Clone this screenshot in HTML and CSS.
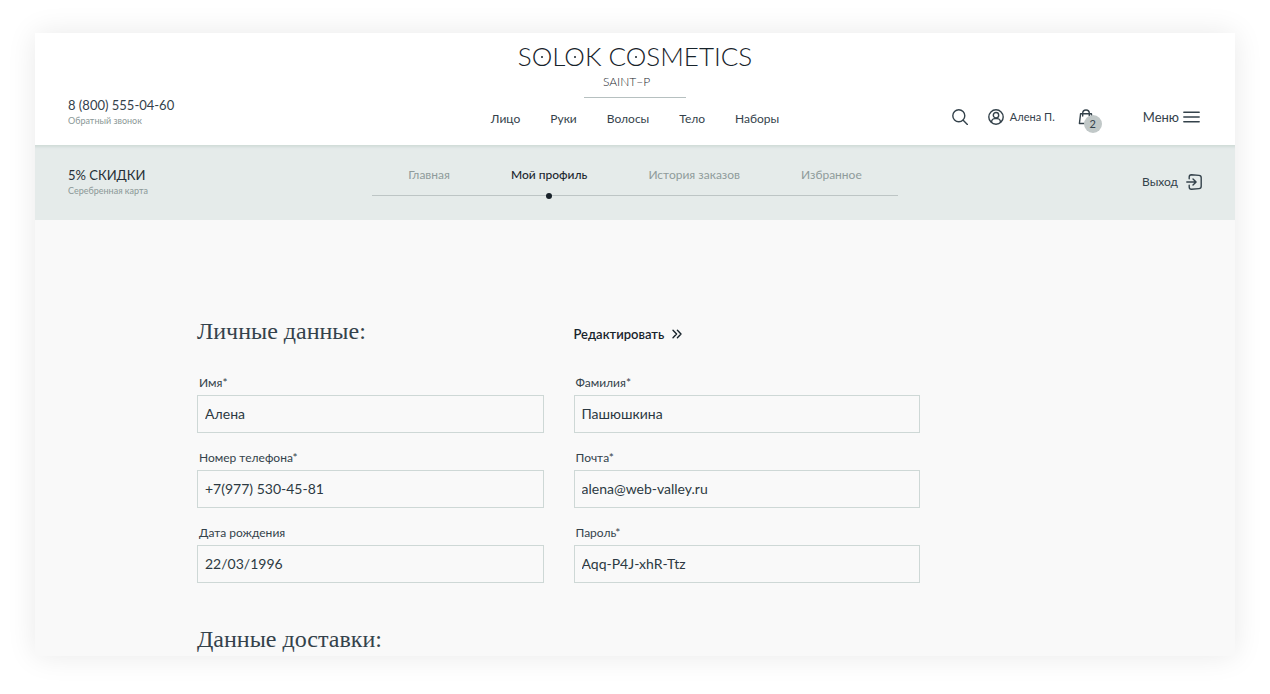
FILE: index.html
```html
<!DOCTYPE html>
<html lang="ru">
<head>
<meta charset="utf-8">
<meta name="viewport" content="width=device-width, initial-scale=1">
<title>Solok Cosmetics — Мой профиль</title>
<link rel="stylesheet" href="styles.css">
</head>
<body>
<div class="shop">
  <header class="header">
    <div class="contact">
      <a class="contact-phone" href="tel:88005550460">8 (800) 555-04-60</a>
      <a class="contact-note" href="#callback">Обратный звонок</a>
    </div>
    <div class="brand">
      <a class="logo" href="#home">
        <span class="logo-name">S<span class="dotted">O</span>L<span class="dotted">O</span>K C<span class="dotted">O</span>SMETICS</span>
        <span class="logo-city">SAINT–P</span>
      </a>
      <nav class="catalog">
        <a href="#face">Лицо</a>
        <a href="#hands">Руки</a>
        <a href="#hair">Волосы</a>
        <a href="#body">Тело</a>
        <a href="#sets">Наборы</a>
      </nav>
    </div>
    <div class="actions">
      <button class="action" type="button" aria-label="Поиск">
        <svg class="icon" viewBox="0 0 16 16"><circle cx="6.8" cy="6.8" r="6"/><path d="M11.2 11.2 15.4 15.4"/></svg>
      </button>
      <a class="action user" href="#profile">
        <svg class="icon" viewBox="0 0 16 16"><circle cx="8" cy="8" r="7.2"/><circle cx="8" cy="6.2" r="2.7"/><path d="M3.6 13.2v-.8c0-1.500 1.600-2.800 3.200-2.800h2.400c1.600 0 3.200 1.300 3.200 2.800v.8"/></svg>
        <span>Алена П.</span>
      </a>
      <a class="action cart" href="#cart" aria-label="Корзина">
        <svg class="icon" viewBox="0 0 16 16"><path d="M2.600 4.700h10.800l1.200 9.800H1.400zM4.700 7V4.300a3.300 3.300 0 0 1 6.600 0V7"/></svg>
        <span class="cart-count">2</span>
      </a>
      <button class="action menu" type="button">
        <span>Меню</span>
        <svg class="icon-menu" viewBox="0 0 17 12"><path d="M.8 1.200h15.400M.8 6h15.400M.8 10.800h15.400"/></svg>
      </button>
    </div>
  </header>

  <div class="account-bar">
    <div class="contact">
      <span class="discount">5% СКИДКИ</span>
      <span class="contact-note">Серебренная карта</span>
    </div>
    <nav class="tabs">
      <a href="#main">Главная</a>
      <a class="tab-active" href="#profile" aria-current="page">Мой профиль</a>
      <a href="#orders">История заказов</a>
      <a href="#favorites">Избранное</a>
    </nav>
    <a class="logout" href="#logout">
      <span>Выход</span>
      <svg class="icon" viewBox="0 0 16 16"><path d="M3.200 4.700V3c0-1.500.8-2.200 2.200-2.200l7.600.6c1.500.1 2.200.9 2.200 2.300v8.600c0 1.400-.7 2.200-2.200 2.300l-7.600.6c-1.400 0-2.200-.7-2.200-2.200v-1.700M.8 8h9M7 4.900 10.100 8 7 11.100"/></svg>
    </a>
  </div>

  <main class="content">
    <form class="profile">
      <h2 class="title">Личные данные:</h2>
      <button class="edit" type="button">
        <span>Редактировать</span>
        <svg class="icon-edit" viewBox="0 0 10 10"><path d="M1 1.200 4.600 5 1 8.800M5.400 1.200 9 5 5.400 8.800"/></svg>
      </button>
      <div class="field">
        <label for="name">Имя*</label>
        <input id="name" type="text" value="Алена">
      </div>
      <div class="field">
        <label for="surname">Фамилия*</label>
        <input id="surname" type="text" value="Пашюшкина">
      </div>
      <div class="field">
        <label for="phone">Номер телефона*</label>
        <input id="phone" type="tel" value="+7(977) 530-45-81">
      </div>
      <div class="field">
        <label for="email">Почта*</label>
        <input id="email" type="email" value="alena@web-valley.ru">
      </div>
      <div class="field">
        <label for="birthday">Дата рождения</label>
        <input id="birthday" type="text" value="22/03/1996">
      </div>
      <div class="field">
        <label for="password">Пароль*</label>
        <input id="password" type="text" value="Aqq-P4J-xhR-Ttz">
      </div>
    </form>
    <h2 class="title">Данные доставки:</h2>
  </main>
</div>
</body>
</html>
```

FILE: styles.css
```css
* {
  box-sizing: border-box;
}

body {
  margin: 0;
  padding: 33px 35px 38px;
  background: #fff;
  color: #34424b;
  font-family: "Lato", "Noto Sans", sans-serif;
  font-size: 13px;
  line-height: 18px;
}

a {
  color: inherit;
  text-decoration: none;
}

button {
  padding: 0;
  border: 0;
  background: none;
  color: inherit;
  font: inherit;
  cursor: pointer;
}

svg {
  display: block;
  fill: none;
  stroke: currentColor;
  stroke-width: 1.4;
  stroke-linecap: round;
  stroke-linejoin: round;
}

.shop {
  background: #f9f9f9;
  box-shadow: 0 0 28px rgba(0, 0, 0, 0.09);
}

.header,
.account-bar {
  display: grid;
  grid-template-columns: 1fr auto 1fr;
  padding: 0 33px;
}

.header {
  align-items: end;
  padding-top: 10px;
  padding-bottom: 17px;
  background: #fff;
}

.contact {
  display: flex;
  flex-direction: column;
}

.contact-phone,
.discount {
  font-size: 13px;
  line-height: 18px;
}

.contact-note {
  color: #8b9897;
  font-size: 9px;
  line-height: 14px;
}

.brand,
.logo {
  display: flex;
  flex-direction: column;
  align-items: center;
}

.logo {
  color: #17232b;
}

.logo-name {
  font-size: 26px;
  font-weight: 300;
  line-height: 26px;
}

.dotted {
  position: relative;
}

.dotted::after {
  content: "";
  position: absolute;
  top: 50%;
  left: 50%;
  width: 2px;
  height: 2px;
  margin-left: -1px;
  border-radius: 50%;
  background: currentColor;
}

.logo-city {
  padding: 4px 36px 7px 19px;
  border-bottom: 1px solid #b6c0c0;
  font-size: 12px;
  font-weight: 300;
  line-height: 17px;
}

.catalog {
  display: flex;
  gap: 30px;
  padding-top: 12px;
  font-size: 12px;
}

.actions {
  display: flex;
  align-items: center;
  justify-content: flex-end;
  padding: 0 2px 2px 0;
}

.action {
  display: flex;
  align-items: center;
}

.icon {
  width: 16px;
  height: 16px;
}

.user {
  gap: 6px;
  margin-left: 20px;
  font-size: 11px;
}

.cart {
  position: relative;
  margin-left: 23px;
}

.cart-count {
  position: absolute;
  top: 6px;
  left: 6px;
  width: 18px;
  border-radius: 50%;
  background: #c1c8c8;
  font-size: 11px;
  text-align: center;
}

.menu {
  gap: 4px;
  margin-left: 49px;
}

.icon-menu {
  width: 17px;
  height: 12px;
}

.account-bar {
  align-items: start;
  padding-top: 21px;
  padding-bottom: 22px;
  background: #e5ebea;
  box-shadow: inset 0 5px 3px -3px #cfdad7;
}

.discount {
  color: #252f36;
}

.tabs {
  display: flex;
  gap: 61px;
  padding: 0 36px 11px;
  border-bottom: 1px solid #bdc5c5;
  color: #8f9b9b;
  font-size: 12px;
}

.tab-active {
  position: relative;
  color: #1c272f;
  font-weight: 500;
}

.tab-active::after {
  content: "";
  position: absolute;
  bottom: -15px;
  left: 50%;
  width: 6px;
  height: 6px;
  margin-left: -3px;
  border-radius: 50%;
  background: #18222a;
}

.logout {
  display: flex;
  align-items: center;
  align-self: center;
  justify-self: end;
  gap: 8px;
  font-size: 12px;
}

.content {
  padding: 95px 32px 1px 162px;
}

.profile {
  display: grid;
  grid-template-columns: 1fr 1fr;
  gap: 16px 30px;
  max-width: 723px;
  margin-bottom: 40px;
}

.title {
  margin: 0;
  font-family: "Liberation Serif", "Noto Serif", serif;
  font-size: 24px;
  font-weight: 400;
  line-height: 32px;
}

.profile .title {
  margin-bottom: 11px;
}

.edit {
  display: flex;
  align-items: center;
  align-self: start;
  justify-self: start;
  gap: 8px;
  color: #18242c;
  font-weight: 600;
  line-height: 38px;
}

.icon-edit {
  width: 10px;
  height: 10px;
}

.field {
  display: flex;
  flex-direction: column;
  gap: 3px;
}

.field label {
  padding-left: 2px;
  font-size: 12px;
}

.field input {
  width: 100%;
  height: 38px;
  padding: 0 7px 2px;
  border: 1px solid #ced8d6;
  border-radius: 0;
  background: transparent;
  color: #2c3942;
  font: inherit;
  font-size: 14px;
}
```
